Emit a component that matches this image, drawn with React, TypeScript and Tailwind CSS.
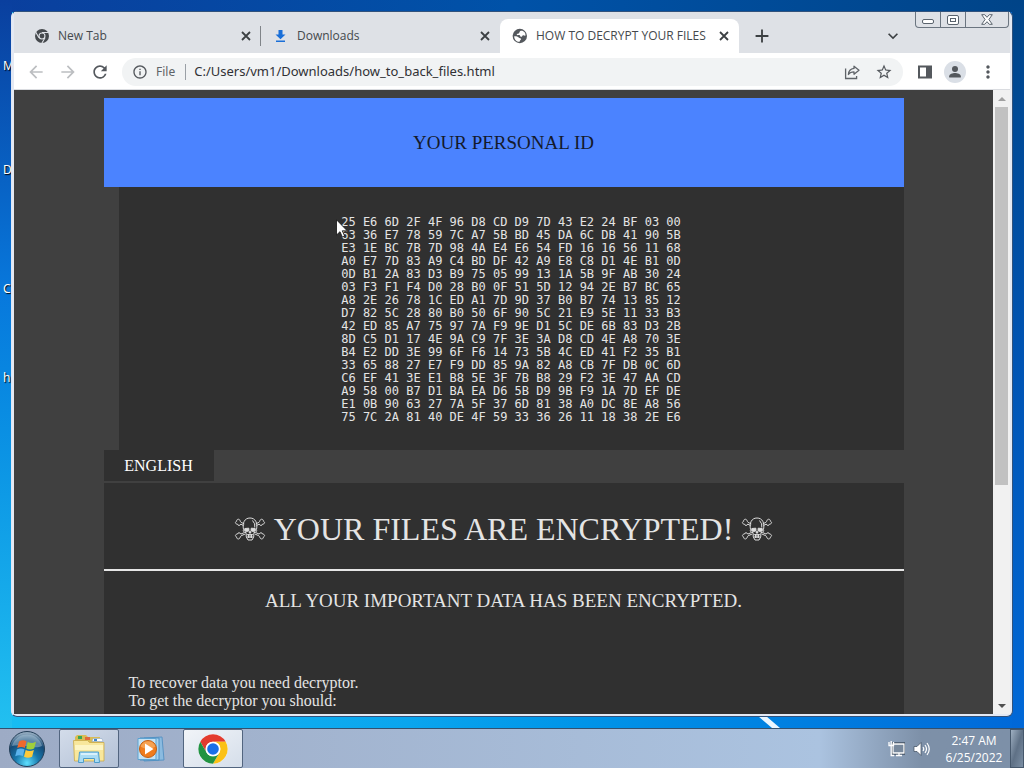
import type { ReactNode } from "react";
import {
  MdAdd,
  MdArrowBack,
  MdArrowForward,
  MdExpandMore,
  MdInfoOutline,
  MdMoreVert,
  MdPerson,
  MdRefresh,
  MdStarBorder,
} from "react-icons/md";

const idRows = [
  "25 E6 6D 2F 4F 96 D8 CD D9 7D 43 E2 24 BF 03 00",
  "63 36 E7 78 59 7C A7 5B BD 45 DA 6C DB 41 90 5B",
  "E3 1E BC 7B 7D 98 4A E4 E6 54 FD 16 16 56 11 68",
  "A0 E7 7D 83 A9 C4 BD DF 42 A9 E8 C8 D1 4E B1 0D",
  "0D B1 2A 83 D3 B9 75 05 99 13 1A 5B 9F AB 30 24",
  "03 F3 F1 F4 D0 28 B0 0F 51 5D 12 94 2E B7 BC 65",
  "A8 2E 26 78 1C ED A1 7D 9D 37 B0 B7 74 13 85 12",
  "D7 82 5C 28 80 B0 50 6F 90 5C 21 E9 5E 11 33 B3",
  "42 ED 85 A7 75 97 7A F9 9E D1 5C DE 6B 83 D3 2B",
  "8D C5 D1 17 4E 9A C9 7F 3E 3A D8 CD 4E A8 70 3E",
  "B4 E2 DD 3E 99 6F F6 14 73 5B 4C ED 41 F2 35 B1",
  "33 65 88 27 E7 F9 DD 85 9A 82 A8 CB 7F DB 0C 6D",
  "C6 EF 41 3E E1 B8 5E 3F 7B B8 29 F2 3E 47 AA CD",
  "A9 58 00 B7 D1 BA EA D6 5B D9 9B F9 1A 7D EF DE",
  "E1 0B 90 63 27 7A 5F 37 6D 81 38 A0 DC 8E A8 56",
  "75 7C 2A 81 40 DE 4F 59 33 36 26 11 18 38 2E E6",
];

function ChromeMono() {
  return (
    <svg viewBox="0 0 16 16" className="size-4">
      <circle cx="8" cy="8" r="7" fill="#45494d" />
      <circle cx="8" cy="8" r="3.5" fill="#dee1e6" />
      <circle cx="8" cy="8" r="2.4" fill="#45494d" />
      <path
        d="M8 4.5h6.4M11 9.8l-3.2 5.4M5 9.8L1.8 4.3"
        stroke="#dee1e6"
        strokeWidth="1.1"
      />
    </svg>
  );
}

function DownloadArrow() {
  return (
    <svg viewBox="0 0 16 16" className="size-4" fill="#1a6fd8">
      <path d="M5.5 2h4v4.5h3L7.5 11.3 2.5 6.5h3z" />
      <path d="M3 12.5h9V14H3z" />
    </svg>
  );
}

function Globe() {
  return (
    <svg viewBox="0 0 16 16" className="size-4">
      <circle cx="7.8" cy="8" r="7.2" fill="#54585d" />
      <path
        d="M8.3 3c1.5-.6 3.3 0 4.3 1.3.7.9 1 2 .9 3.200-1 .7-1.3-.5-2.3-.3-1.2.3-.9 1.8-2.2 1.6-1.2-.2-.6-1.5-1.8-1.7-1-.1-1.7.4-2.5-.3C4.5 5.5 6.8 6 7.2 5c.3-.8.3-1.5 1.1-2z"
        fill="#fff"
      />
      <path
        d="M2.2 8.2c1.5-.2 3.6.2 4.5 1.3.8 1 2.3.6 2.4 1.6.1 1-1.3 1-1.5 2.7-2.9.2-5.4-2.4-5.4-5.6z"
        fill="#fff"
      />
    </svg>
  );
}

function CloseIcon() {
  return (
    <svg viewBox="0 0 16 16" className="size-4" stroke="#3c4043" strokeWidth="1.8">
      <path d="M4 4l8 8M12 4l-8 8" />
    </svg>
  );
}

function ShareIcon() {
  return (
    <svg
      viewBox="0 0 18 18"
      className="size-[18px]"
      fill="none"
      stroke="#5f6368"
      strokeWidth="1.3"
    >
      <path d="M2.6 5.5v10h11V13" />
      <path
        d="M11 3.2l5 4-5 4V8.9c-2.7 0-4.3.7-5.6 2.600C5.6 8.2 7.5 5.8 11 5.4z"
        strokeLinejoin="round"
      />
    </svg>
  );
}

function SidePanelIcon() {
  return (
    <svg viewBox="0 0 14 14" className="size-3.5">
      <path d="M0 .5h14v13H0zM2 2.5v9h6v-9z" fill="#54585d" fillRule="evenodd" />
    </svg>
  );
}

function Skull() {
  return (
    <svg
      viewBox="0 0 32 26"
      className="h-[26px] w-8 shrink-0"
      fill="none"
      stroke="#dcdcdc"
      strokeLinejoin="round"
      role="img"
      aria-label="☠"
    >
      <path d="M9.500 9.500L6.800 8.100C6.300 9.800 3.800 9.900 3.500 8.200 1 8 .8 5.800 2.700 5.200 2.400 3.200 5 2.400 5.900 4.300c.6 1 .5 1.700 1.200 2.100l3.200 1.500M22.500 9.500l2.700-1.400c.5 1.700 3 1.800 3.300.1 2.500-.2 2.700-2.400.8-3 .3-2-2.300-2.800-3.200-.9-.6 1-.5 1.700-1.200 2.100l-3.200 1.500" />
      <path d="M10.500 16.500l-3.700 1.600c-.5-1.700-3-1.800-3.300-.1-2.500.2-2.700 2.400-.8 3-.3 2 2.300 2.800 3.200.9.600-1 .5-1.700 1.200-2.100l4-1.800M21.500 16.500l3.700 1.600c.5-1.700 3-1.800 3.300-.1 2.500.2 2.700 2.400.8 3 .3 2-2.300 2.800-3.200.9-.6-1-.5-1.700-1.200-2.100l-4-1.800" />
      <path d="M9.500 13.500C8.200 7 10.500 2 16 2s7.800 5 6.500 11.500c.8 1.800-.7 3-2.500 3.100l-.3 4.400-1.700 3h-4l-1.700-3-.3-4.400c-1.800-.1-3.300-1.300-2.500-3.100z" />
      <path
        d="M10.800 12.500l4-.3.2 2.6-2.700.9-1.700-1zM21.200 12.500l-4-.3-.2 2.600 2.700.9 1.700-1zM16 15l1 2h-2z"
        fill="#dcdcdc"
      />
      <path d="M12.600 18.700h6.800M13 21h6M14.500 18v4M16 18v4M17.500 18v4M18.500 4.500q3 3 2.300 7" />
    </svg>
  );
}

function Tab({
  icon,
  title,
  active,
  divider,
}: {
  icon: ReactNode;
  title: string;
  active?: boolean;
  divider?: boolean;
}) {
  return (
    <div
      className={`relative flex h-[34px] w-[239px] min-w-0 items-center gap-2 pr-[7px] pl-3 ${
        active ? "rounded-t-lg bg-white" : ""
      }`}
    >
      <button
        role="tab"
        aria-selected={!!active}
        className="flex min-w-0 flex-1 items-center gap-2 text-left font-['Open_Sans',sans-serif] text-xs whitespace-nowrap text-[#45494d]"
      >
        {icon}
        {title}
      </button>
      <button aria-label={`Close ${title}`}>
        <CloseIcon />
      </button>
      {divider && <span className="absolute right-0 h-5 w-px bg-[#808489]" />}
    </div>
  );
}

function WindowControls() {
  return (
    <div className="mr-px flex h-4 self-start rounded-b border border-t-0 border-[#6b7580]">
      <button aria-label="Minimize" className="flex w-[25px] items-end justify-center border-r border-[#6b7580] pb-[3px]">
        <span className="h-[5px] w-3 rounded-xs border border-[#5a636d] bg-white" />
      </button>
      <button aria-label="Maximize" className="flex w-[25px] items-center justify-center border-r border-[#6b7580]">
        <span className="flex h-[10px] w-3 items-center justify-center rounded-xs border border-[#5a636d] bg-white">
          <span className="h-1 w-1.5 border border-[#5a636d]" />
        </span>
      </button>
      <button aria-label="Close" className="flex w-[42px] items-center justify-center">
        <svg viewBox="0 0 12 11" className="h-[11px] w-3" fill="#fff" stroke="#5a636d">
          <path d="M.7.7h3L6 3.300 8.3.7h3L7.9 5.500l3.400 4.800h-3L6 7.700l-2.300 2.600h-3l3.400-4.800z" />
        </svg>
      </button>
    </div>
  );
}

function Toolbar() {
  return (
    <div className="flex h-[37px] shrink-0 items-center border-b border-[#dadce0] bg-white px-3 pt-px text-[#54585d]">
      <div className="flex gap-3">
        <button aria-label="Back" className="text-[#bcbec1]">
          <MdArrowBack className="size-5" />
        </button>
        <button aria-label="Forward" className="text-[#bcbec1]">
          <MdArrowForward className="size-5" />
        </button>
        <button aria-label="Reload">
          <MdRefresh className="size-5" />
        </button>
      </div>
      <div className="ml-3 flex h-7 flex-1 items-center rounded-full bg-[#f1f3f4] px-2.5">
        <MdInfoOutline className="size-4" />
        <label htmlFor="url" className="ml-2 text-xs text-[#5f6368]">
          File
        </label>
        <span className="mr-2 ml-2.5 h-4 w-px bg-[#9aa0a6]" />
        <input
          id="url"
          className="min-w-0 flex-1 bg-transparent text-[13px] text-[#303134] outline-none"
          defaultValue="C:/Users/vm1/Downloads/how_to_back_files.html"
        />
        <button aria-label="Share" className="mr-3.5">
          <ShareIcon />
        </button>
        <button aria-label="Bookmark">
          <MdStarBorder className="size-[18px]" />
        </button>
      </div>
      <div className="ml-[15px] flex items-center gap-3">
        <button aria-label="Side panel">
          <SidePanelIcon />
        </button>
        <button
          aria-label="Profile"
          className="flex size-[22px] items-center justify-center rounded-full bg-[#dadfe6]"
        >
          <svg viewBox="0 0 16 16" className="size-4" fill="#54585d">
            <circle cx="8" cy="5" r="3" />
            <path d="M2.200 13.500v-1.300c0-2 3.600-3.200 5.800-3.200s5.800 1.200 5.800 3.200v1.300z" />
          </svg>
        </button>
        <button aria-label="Menu">
          <MdMoreVert className="size-5" />
        </button>
      </div>
    </div>
  );
}

function NotePage() {
  return (
    <main className="min-w-0 flex-1 overflow-hidden bg-[#404040] pt-2 font-['Liberation_Serif',serif] text-base leading-[18px] text-[#e4e4e4]">
      <div className="mx-auto max-w-[800px]">
        <h3 className="flex h-[89px] items-center justify-center bg-[#4b83ff] text-[19px] text-[#141a2c]">
          YOUR PERSONAL ID
        </h3>
        <pre className="ml-[15px] bg-[#303030] pt-[29px] pb-[26px] text-center font-['DejaVu_Sans_Mono',monospace] text-[12px] leading-[13px] text-[#e4e4e4]">
          {idRows.join("\n")}
        </pre>
        <button className="mb-0.5 block h-[31px] w-[110px] bg-[#303030] text-white">
          ENGLISH
        </button>
        <div className="bg-[#303030]">
          <h1 className="flex h-[86px] items-center justify-center gap-2 pt-1.5 text-[32px] leading-9">
            <Skull />
            YOUR FILES ARE ENCRYPTED!
            <Skull />
          </h1>
          <hr className="border-t-2 border-[#e6e6e6]" />
          <h3 className="pt-5 text-center text-[19px] leading-5">
            ALL YOUR IMPORTANT DATA HAS BEEN ENCRYPTED.
          </h3>
          <p className="px-[25px] pt-[63px] pb-16">
            To recover data you need decryptor.
            <br />
            To get the decryptor you should:
          </p>
        </div>
      </div>
    </main>
  );
}

function Scrollbar() {
  return (
    <div className="flex w-[17px] shrink-0 flex-col items-center bg-[#f1f1f1]">
      <button aria-label="Scroll up" className="flex h-[17px] items-center">
        <span className="border-x-4 border-b-4 border-x-transparent border-b-[#a0a0a0]" />
      </button>
      <div className="w-[13px] flex-1">
        <div className="h-[64%] bg-[#c1c1c1]" />
      </div>
      <button aria-label="Scroll down" className="flex h-[17px] items-center">
        <span className="border-x-4 border-t-4 border-x-transparent border-t-[#505050]" />
      </button>
    </div>
  );
}

function BrowserWindow() {
  return (
    <div className="relative flex min-h-0 flex-1 flex-col rounded-md border border-[#31527c] border-l-[#dfe6f3] bg-[#e4e9f3] px-0.5 pb-0.5">
      <div className="flex h-[41px] shrink-0 items-end bg-[#dee1e6] pl-2">
        <div role="tablist" className="flex">
          <Tab icon={<ChromeMono />} title="New Tab" divider />
          <Tab icon={<DownloadArrow />} title="Downloads" />
          <Tab icon={<Globe />} title="HOW TO DECRYPT YOUR FILES" active />
        </div>
        <button aria-label="New tab" className="ml-3 flex h-[34px] items-center text-[#3c4043]">
          <MdAdd className="size-[22px]" />
        </button>
        <button
          aria-label="Search tabs"
          className="mr-3 ml-auto flex h-[34px] items-center text-[#3c4043]"
        >
          <MdExpandMore className="size-5" />
        </button>
        <WindowControls />
      </div>
      <Toolbar />
      <div className="flex min-h-0 flex-1">
        <NotePage />
        <Scrollbar />
      </div>
    </div>
  );
}

function StartOrb() {
  return (
    <svg viewBox="0 0 38 38" className="size-[38px]">
      <defs>
        <radialGradient id="orb" cx="50%" cy="90%" r="85%">
          <stop offset="0" stopColor="#5fe0ff" />
          <stop offset="0.4" stopColor="#1878ac" />
          <stop offset="0.75" stopColor="#154a76" />
          <stop offset="1" stopColor="#8fa8bd" />
        </radialGradient>
      </defs>
      <circle cx="19" cy="19" r="17.5" fill="url(#orb)" stroke="#233e58" />
      <path d="M4 16a15.5 15.5 0 0 1 30 0c-8 4-20-3-30 0z" fill="#b9d0e0" opacity="0.45" />
      <path d="M11 11.500c3-1.700 5.500-1.400 7.500-.2l-1.700 6.700c-2.200-1.200-4.700-1.400-7.600.1z" fill="#f0692c" />
      <path d="M19.700 12c2.500 1.300 5 1.400 8.300-.3l-1.800 6.900c-3 1.400-5.500 1.200-8-.1z" fill="#9fce3b" />
      <path d="M8.900 19.400c3-1.500 5.500-1.200 7.600 0l-1.700 6.700c-2.300-1.200-4.600-1.300-7.600.1z" fill="#5bb3ec" />
      <path d="M17.700 20c2.500 1.200 5.200 1.300 8.200-.1l-1.800 6.800c-2.900 1.500-5.600 1.300-8.100 0z" fill="#fdca3a" />
    </svg>
  );
}

function FolderIcon() {
  return (
    <svg viewBox="0 0 34 32" className="h-8 w-[34px]">
      <path d="M3 4l2-2h9l2 2h12v6H3z" fill="#d9bc55" />
      <path d="M6 3h4v3H6z" fill="#3aa655" />
      <path d="M13 4h5v3h-5z" fill="#e06a3c" />
      <path d="M21 5.500h9l1 3H20z" fill="#fff" stroke="#8ea8c4" strokeWidth="0.6" />
      <path d="M22 6h3v2h-3z" fill="#3c86d0" />
      <path d="M1.500 7.500h14l2 2H32V28H2.500z" fill="#f8e79c" stroke="#c9a94a" strokeWidth="0.8" />
      <path d="M3 12h28v5H3z" fill="#fdf5c5" />
      <path
        d="M6.500 29.500l1-10.500h19l1 10.500h-5v-4h-11v4z"
        fill="#a9dcf4"
        stroke="#4d9ccb"
      />
      <path d="M9 21h16" stroke="#e9f8ff" strokeWidth="1.5" />
    </svg>
  );
}

function MediaIcon() {
  return (
    <svg viewBox="0 0 30 28" className="h-7 w-[30px]">
      <path d="M8 3l18-1 2 23-20 1z" fill="#8bbbe0" stroke="#5a94c4" />
      <path d="M4 3h19v22H4z" fill="#a7d2ee" stroke="#4d8fc2" />
      <path d="M2 3.500h18v21H2z" fill="#c5e2f4" stroke="#5da3d1" />
      <circle cx="12" cy="14" r="8.5" fill="#ef7c1d" stroke="#c25d10" />
      <path d="M4.500 11.500a8 8 0 0 1 15 0c-5 3-10 3-15 0z" fill="#f9b26a" opacity="0.7" />
      <path d="M9 8.500l8.500 5.500L9 19.500z" fill="#fff" />
    </svg>
  );
}

function ChromeIcon() {
  return (
    <svg viewBox="0 0 48 48" className="size-[32px]">
      <circle cx="24" cy="24" r="22" fill="#fff" />
      <path d="M24 13h19.050A22 22 0 0 0 4.950 13l9.520 16.500A11 11 0 0 1 24 13z" fill="#e33b2e" />
      <path d="M33.530 29.500L24 46A22 22 0 0 0 43.050 13H24a11 11 0 0 1 9.530 16.500z" fill="#fbc116" />
      <path d="M14.470 29.500L4.950 13A22 22 0 0 0 24 46l9.530-16.500a11 11 0 0 1-19.060 0z" fill="#229342" />
      <circle cx="24" cy="24" r="11" fill="#fff" />
      <circle cx="24" cy="24" r="8.7" fill="#1a6fe8" />
    </svg>
  );
}

function Taskbar() {
  return (
    <footer className="flex h-10 shrink-0 items-stretch border-t border-[#33506e] bg-linear-to-r from-[#9dabc5] via-[#abc3e0] via-80% to-[#7d90a8] to-90% font-['Noto_Sans',sans-serif]">
      <button aria-label="Start" className="ml-2 flex w-[38px] items-center justify-center">
        <StartOrb />
      </button>
      <button
        aria-label="Windows Explorer"
        className="ml-[13px] flex w-[60px] items-center justify-center rounded-xs border border-[#52657f] bg-linear-to-br from-[#d3dcea] to-[#b3c1d6]"
      >
        <FolderIcon />
      </button>
      <button aria-label="Windows Media Player" className="flex w-16 items-center justify-center">
        <MediaIcon />
      </button>
      <button
        aria-label="Google Chrome"
        className="flex w-[60px] items-center justify-center rounded-xs border border-[#52657f] bg-linear-to-br from-[#f1f4f8] to-[#d5deea]"
      >
        <ChromeIcon />
      </button>
      <div className="ml-auto flex items-center gap-2">
        <button aria-label="Network">
          <svg viewBox="0 0 17 16" className="h-4 w-[17px]">
            <path d="M5 3h11v9H5z" fill="#77889c" stroke="#1f2b38" strokeWidth="3" />
            <path d="M5 3h11v9H5zM8 14.500h6M11 12v2.500" fill="#77889c" stroke="#fff" strokeWidth="1.3" />
            <path d="M1 1v3.500h4.500V1M3.200 0v5M3.200 5v9.500h3" fill="none" stroke="#fff" strokeWidth="1.3" />
          </svg>
        </button>
        <button aria-label="Volume">
          <svg viewBox="0 0 17 16" className="h-4 w-[17px]">
            <path d="M1 5.500h3L8 1.500v13l-4-4H1z" fill="#fff" stroke="#3c4b5c" strokeWidth="0.7" />
            <path d="M10 6q1.500 2 0 4M12 4q3 4 0 8M14 2q4.500 6 0 12" fill="none" stroke="#fff" strokeWidth="1.2" />
          </svg>
        </button>
        <button className="w-[72px] text-center font-['Open_Sans',sans-serif] text-xs leading-[17px] text-white">
          2:47 AM
          <br />
          6/25/2022
        </button>
      </div>
      <button
        aria-label="Show desktop"
        className="w-3.5 border border-[#46586c] bg-linear-to-br from-[#9fb0c2] via-[#5f7186] to-[#7c8fa4]"
      />
    </footer>
  );
}

export default function App() {
  return (
    <div className="flex h-screen flex-col overflow-hidden font-['Noto_Sans',sans-serif]">
      <div className="relative flex min-h-0 flex-1 flex-col bg-linear-to-r from-[#18bdf2] via-[#0aa5ee] via-40% to-[#0068d8] p-[11px]">
        {/* Wallpaper around the window */}
        <div className="absolute inset-x-0 top-0 h-3 bg-linear-to-r from-[#0a3f9e] via-[#0052a8] to-[#004488]" />
        <div className="absolute inset-y-0 left-0 w-3 bg-linear-to-b from-[#0a3f9e] via-[#0878dc] via-40% to-[#22c0f0]" />
        <div className="absolute inset-y-0 right-0 w-3 bg-linear-to-b from-[#004488] via-[#0054b4] to-[#0068d8]" />
        <svg viewBox="0 0 28 12" className="absolute bottom-0 left-[74%] h-3 w-7">
          <path d="M0 0h8l14 12h-8z" fill="#eaf6ff" />
        </svg>
        {/* Desktop icon labels */}
        <div className="absolute left-[3px] text-xs leading-4 text-white text-shadow-[1px_1px_1px_#000]">
          <span className="absolute top-[47px]">M</span>
          <span className="absolute top-[151px]">D</span>
          <span className="absolute top-[270px]">C</span>
          <span className="absolute top-[359px]">h</span>
        </div>
        <BrowserWindow />
        <svg viewBox="0 0 12 19" className="absolute top-[219px] left-[336px] h-[19px] w-3">
          <path
            d="M.5.8V16L4 12.700 6.300 18l2.300-1-2.300-5.200h4.900z"
            fill="#fff"
            stroke="#111"
            strokeWidth="0.8"
          />
        </svg>
      </div>
      <Taskbar />
    </div>
  );
}
